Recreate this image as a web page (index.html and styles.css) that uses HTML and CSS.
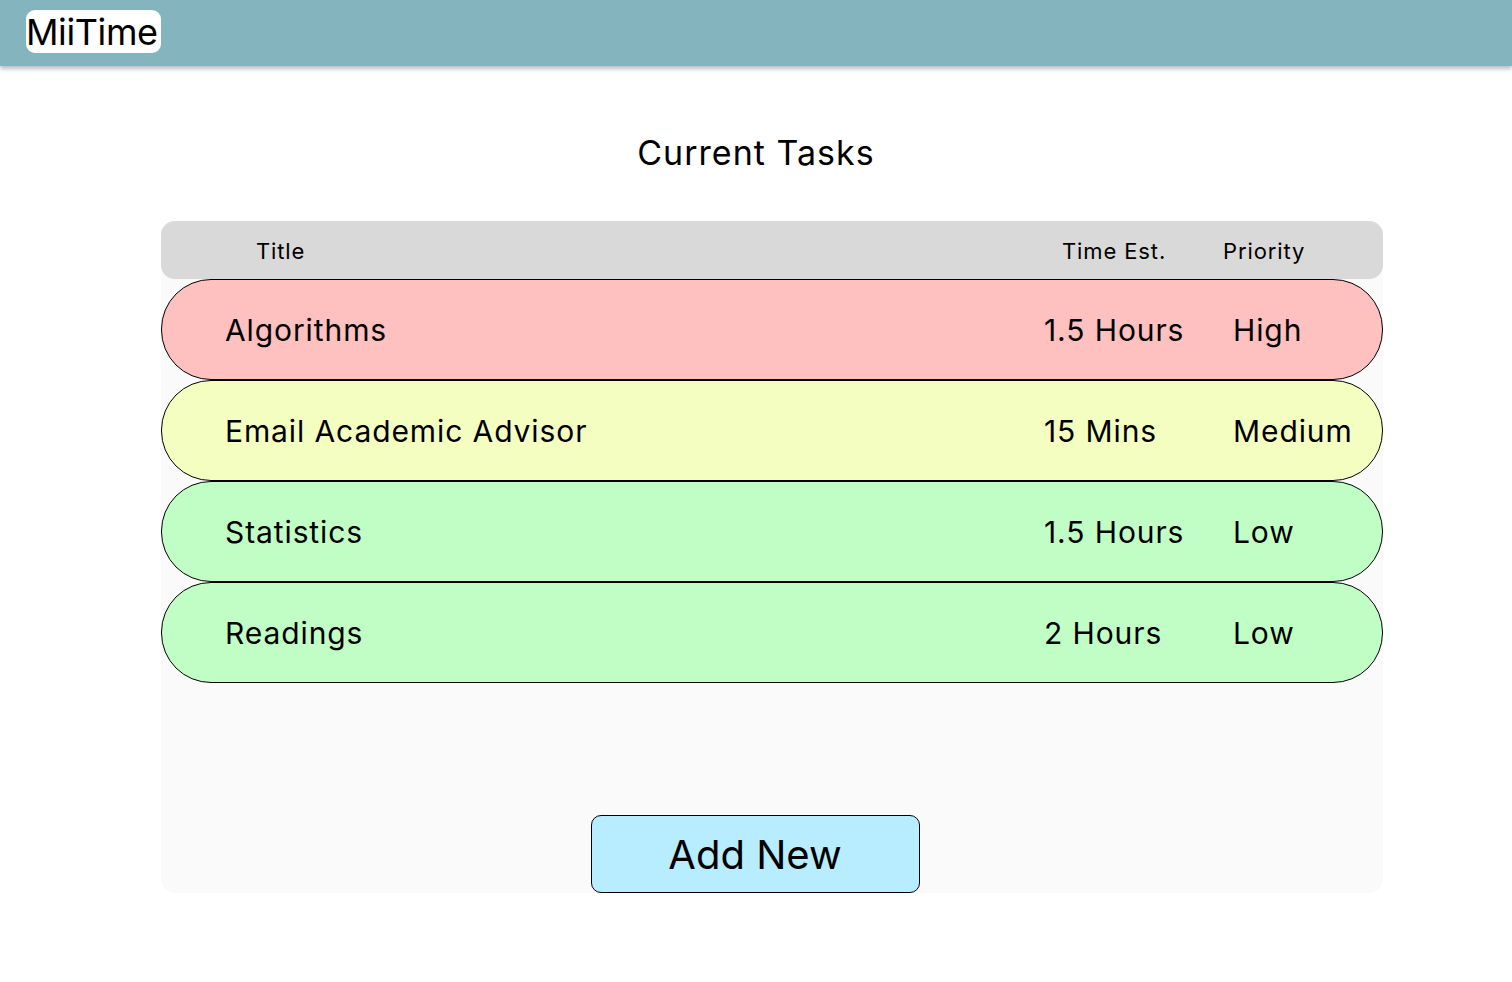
FILE: index.html
```html
<!DOCTYPE html>
<html lang="en">
<head>
<meta charset="utf-8">
<title>MiiTime</title>
<link rel="stylesheet" href="styles.css">
</head>
<body>
<header class="topbar">
  <div class="logo">MiiTime</div>
</header>
<main class="main">
  <h1 class="page-title">Current Tasks</h1>
  <section class="panel">
    <div class="table-head">
      <span class="th th-title">Title</span>
      <span class="th th-time">Time Est.</span>
      <span class="th th-priority">Priority</span>
    </div>
    <div class="rows">
      <div class="row row-high">
        <span class="cell cell-title">Algorithms</span>
        <span class="cell">1.5 Hours</span>
        <span class="cell">High</span>
      </div>
      <div class="row row-medium">
        <span class="cell cell-title">Email Academic Advisor</span>
        <span class="cell">15 Mins</span>
        <span class="cell">Medium</span>
      </div>
      <div class="row row-low">
        <span class="cell cell-title">Statistics</span>
        <span class="cell">1.5 Hours</span>
        <span class="cell">Low</span>
      </div>
      <div class="row row-low">
        <span class="cell cell-title">Readings</span>
        <span class="cell">2 Hours</span>
        <span class="cell">Low</span>
      </div>
    </div>
    <button class="add-btn" type="button">Add New</button>
  </section>
</main>
</body>
</html>
```

FILE: styles.css
```css
* { box-sizing: border-box; }
html, body { margin: 0; padding: 0; }
body {
  background: #ffffff;
  font-family: Inter, "Liberation Sans", Arial, sans-serif;
  color: #000;
  width: 1512px;
  min-height: 982px;
}
.topbar {
  height: 66px;
  background: #84b5bf;
  box-shadow: 0 3px 4px rgba(0,0,0,0.25);
  padding: 10px 0 0 26px;
  position: relative;
  z-index: 1;
}
.logo {
  display: inline-block;
  width: 135px;
  height: 43px;
  background: #ffffff;
  border-radius: 9px;
  font-size: 36px;
  line-height: 44px;
  padding-left: 0;
  letter-spacing: -0.4px;
  white-space: nowrap;
}
.main {
  display: flex;
  flex-direction: column;
}
.page-title {
  margin: 67px 0 0 0;
  height: 40px;
  font-size: 34px;
  line-height: 40px;
  font-weight: 400;
  letter-spacing: 0.03em;
  text-align: center;
}
.panel {
  margin: 48px 0 0 161px;
  width: 1222px;
  height: 672px;
  background: #fafafa;
  border-radius: 14px;
  display: flex;
  flex-direction: column;
  align-items: stretch;
}
.table-head {
  height: 58px;
  background: #d9d9d9;
  border-radius: 14px;
  display: grid;
  grid-template-columns: 901px 161px 1fr;
  align-items: center;
  font-size: 22px;
  letter-spacing: 0.04em;
  padding-top: 1px;
}
.th-title { padding-left: 95px; }
.rows {
  display: flex;
  flex-direction: column;
}
.row {
  height: 101px;
  border: 1px solid #000;
  border-radius: 50px;
  display: grid;
  grid-template-columns: 882px 189px 1fr;
  align-items: center;
  font-size: 30px;
  letter-spacing: 0.03em;
  white-space: nowrap;
}
.cell-title { padding-left: 63px; }
.row-high { background: #ffc0c0; }
.row-medium { background: #f4fec0; }
.row-low { background: #c0fec5; }
.add-btn {
  margin: auto auto 0 auto;
  width: 329px;
  height: 78px;
  background: #b8edff;
  border: 1px solid #000;
  border-radius: 10px;
  font-family: Inter, "Liberation Sans", Arial, sans-serif;
  font-size: 40px;
  color: #000;
  padding: 0;
  transform: translateX(-17px);
}
```
